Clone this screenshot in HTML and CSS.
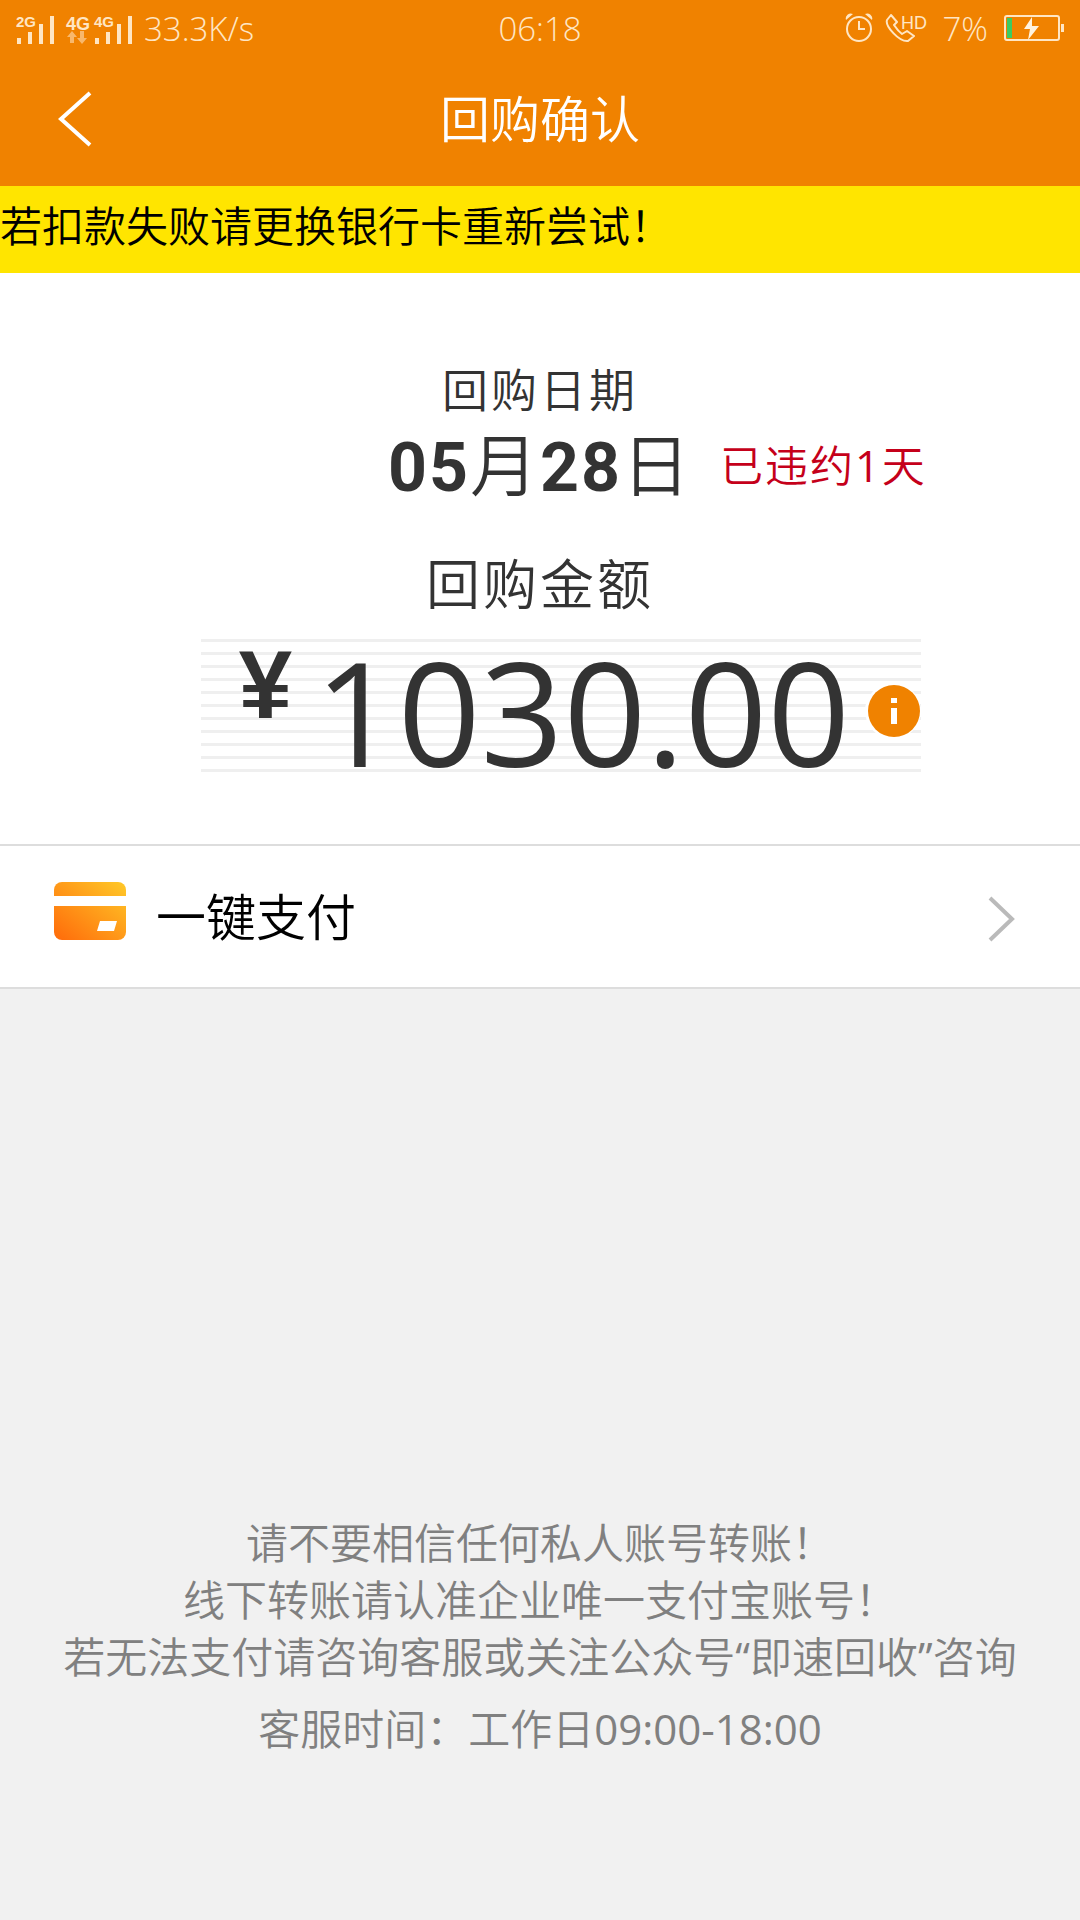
FILE: index.html
```html
<!DOCTYPE html>
<html lang="zh-CN">
<head>
<meta charset="utf-8">
<meta name="viewport" content="width=device-width, initial-scale=1">
<title>回购确认</title>
<link rel="stylesheet" href="styles.css">
</head>
<body>
<div class="page">
  <div class="status">
    <div class="status-side">
      <svg class="signals" width="124" height="34" viewBox="0 0 124 34" fill="currentColor" aria-hidden="true">
        <text x="0" y="16" font-size="15">2G</text>
        <path d="M1 27h4v6h-4zM12 21h4v12h-4zM23 13h4v20h-4zM34 5h4v28h-4z"/>
        <text x="50" y="19" font-size="18">4G</text>
        <text x="78" y="16" font-size="15">4G</text>
        <path opacity=".55" d="M56 20l5 6h-3v6h-4v-6h-3zM64 20h4v7h3l-5 6l-5-6h3z"/>
        <path d="M79 27h4v6h-4zM90 21h4v12h-4zM101 13h4v20h-4zM112 5h4v28h-4z"/>
      </svg>
      <span>33.3K/s</span>
    </div>
    <time class="clock">06:18</time>
    <div class="status-side status-right">
      <svg width="28" height="30" viewBox="0 0 28 30" fill="none" stroke="currentColor" stroke-width="2" aria-hidden="true">
        <circle cx="14" cy="16" r="12"/>
        <path d="M14 8v8h6"/>
        <path d="M1 7a5 5 0 0 1 7-6zM27 7a5 5 0 0 0-7-6z" fill="currentColor" stroke="none"/>
      </svg>
      <svg class="call" width="44" height="40" viewBox="0 -4 44 40" fill="none" stroke="currentColor" stroke-width="2" stroke-linejoin="round" aria-hidden="true">
        <path d="M6 3L2 8C0 14 14 30 23 29L29 24L22 19L17 22C13 19 11 16 9 13L12 10Z"/>
        <text x="16" y="17" font-size="18" fill="currentColor" stroke="none">HD</text>
      </svg>
      <span class="percent">7%</span>
      <svg width="60" height="28" viewBox="0 0 60 28" aria-hidden="true">
        <rect x="1" y="2" width="54" height="24" rx="2" fill="none" stroke="currentColor" stroke-width="2"/>
        <path d="M57 10h3v8h-3z" fill="currentColor"/>
        <path d="M3 4h5v20h-5z" fill="#3ccb63"/>
        <path d="M28 3L20 15h6l-2 11L35 12h-7z" fill="#fff3df"/>
      </svg>
    </div>
  </div>
  <header class="nav">
    <button class="back" type="button" aria-label="返回">
      <svg width="34" height="56" viewBox="0 0 34 56" fill="none" stroke="currentColor" stroke-width="4"><path d="M32 2L3 28L32 54"/></svg>
    </button>
    <h1 class="title">回购确认</h1>
  </header>
  <p class="notice">若扣款失败请更换银行卡重新尝试！</p>
  <main class="summary">
    <h2 class="label">回购日期</h2>
    <div class="date-row">
      <p class="date"><b>05</b>月<b>28</b>日</p>
      <span class="overdue">已违约<span class="digits">1</span>天</span>
    </div>
    <h2 class="label label-large">回购金额</h2>
    <div class="amount">
      <span class="currency">¥</span>
      <span class="value digits">1030.00</span>
      <button class="info" type="button" aria-label="金额说明">
        <svg width="56" height="56" viewBox="0 0 56 56">
          <circle cx="28" cy="28" r="28" fill="#fff"/>
          <circle cx="29" cy="28" r="26" fill="#f08200"/>
          <path d="M26 15h6v5h-6zM26 25h6v16h-6z" fill="#fff"/>
        </svg>
      </button>
    </div>
  </main>
  <a class="pay" href="#pay">
    <svg class="card" width="72" height="58" viewBox="0 0 72 58" aria-hidden="true">
      <defs><linearGradient id="card-fill" x1="0" y1="1" x2="1" y2="0"><stop offset="0" stop-color="#ff6a0a"/><stop offset="1" stop-color="#ffc928"/></linearGradient></defs>
      <rect width="72" height="58" rx="8" fill="url(#card-fill)"/>
      <path d="M0 14h72v10H0zM46 39h17l-3 10H43z" fill="#fff"/>
    </svg>
    <span class="pay-text">一键支付</span>
    <svg class="chevron" width="28" height="46" viewBox="0 0 28 46" fill="none" stroke="#bababa" stroke-width="4" aria-hidden="true"><path d="M2 2L24 23L2 44"/></svg>
  </a>
  <footer class="help">
    <p>请不要相信任何私人账号转账！</p>
    <p>线下转账请认准企业唯一支付宝账号！</p>
    <p>若无法支付请咨询客服或关注公众号<span class="digits">“</span>即速回收<span class="digits">”</span>咨询</p>
    <p class="hours">客服时间：工作日<span class="digits">09:00-18:00</span></p>
  </footer>
</div>
</body>
</html>
```
FILE: styles.css
```css
* { box-sizing: border-box; }

body, h1, h2, p { margin: 0; font-weight: 350; }

body {
  background: #f1f1f1;
  color: #333;
  font-family: "Open Sans", "Noto Sans CJK SC", sans-serif;
}

button { padding: 0; border: 0; background: none; color: inherit; cursor: pointer; }

svg { display: block; flex: none; }

.digits { font-weight: 400; }

.page { display: flex; flex-direction: column; min-height: 100vh; }

.status {
  display: grid;
  grid-template-columns: 1fr auto 1fr;
  align-items: center;
  height: 56px;
  padding: 0 16px;
  background: #f08200;
  color: #ffe6c4;
  font-size: 33px;
}

.status-side { display: flex; align-items: center; gap: 4px; }
.status-right { justify-content: flex-end; gap: 12px; }
.percent { margin: 0 4px 0 2px; }
.signals { font-family: "Liberation Sans", sans-serif; font-weight: 700; }
.call { font-family: "Liberation Sans", sans-serif; font-weight: 400; }

.nav {
  display: grid;
  grid-template-columns: 1fr auto 1fr;
  align-items: center;
  height: 130px;
  padding: 0 58px 5px;
  background: #f08200;
  color: #fff;
}

.back { justify-self: start; }
.title { font-size: 50px; line-height: 60px; }

.notice {
  padding: 12px 0 19px;
  background: #ffe500;
  color: #000;
  font-size: 42px;
  line-height: 56px;
}

.summary {
  display: flex;
  flex-direction: column;
  align-items: center;
  padding: 84px 0 72px;
  background: #fff;
}

.label { font-size: 46px; line-height: 64px; letter-spacing: 3px; }
.label-large { margin-top: 36px; font-size: 54px; line-height: 72px; }

.date-row {
  display: grid;
  grid-template-columns: 1fr auto 1fr;
  align-items: center;
  align-self: stretch;
  column-gap: 28px;
}

.date { grid-column: 2; font-size: 68px; line-height: 88px; letter-spacing: 2px; }
.date b { font-family: Roboto, sans-serif; font-weight: 700; }
.overdue { padding-bottom: 6px; color: #c5001a; font-size: 43px; letter-spacing: 2px; }

.amount {
  display: flex;
  align-items: center;
  height: 133px;
  margin: 19px 0 0 42px;
  padding: 10px 0 0 38px;
  background: repeating-linear-gradient(#efefef 0 3px, #fff 3px 13px);
}

.currency {
  align-self: flex-start;
  width: 76px;
  font-family: "Liberation Sans", sans-serif;
  font-size: 96px;
  font-weight: 700;
  line-height: 72px;
}

.value { font-size: 145px; line-height: 123px; }
.info { margin-left: 15px; border-radius: 50%; }

.pay {
  display: flex;
  align-items: center;
  height: 145px;
  padding: 0 64px 0 54px;
  border-top: 2px solid #ddd;
  border-bottom: 2px solid #ddd;
  background: #fff;
  color: #000;
  font-size: 50px;
  text-decoration: none;
}

.card { margin-bottom: 12px; }
.pay-text { flex: 1; margin-left: 30px; padding-bottom: 4px; }
.chevron { margin-top: 4px; }

.help {
  margin-top: auto;
  padding-bottom: 163px;
  color: #808080;
  font-size: 42px;
  line-height: 57px;
  text-align: center;
}

.hours { margin-top: 15px; }
```
